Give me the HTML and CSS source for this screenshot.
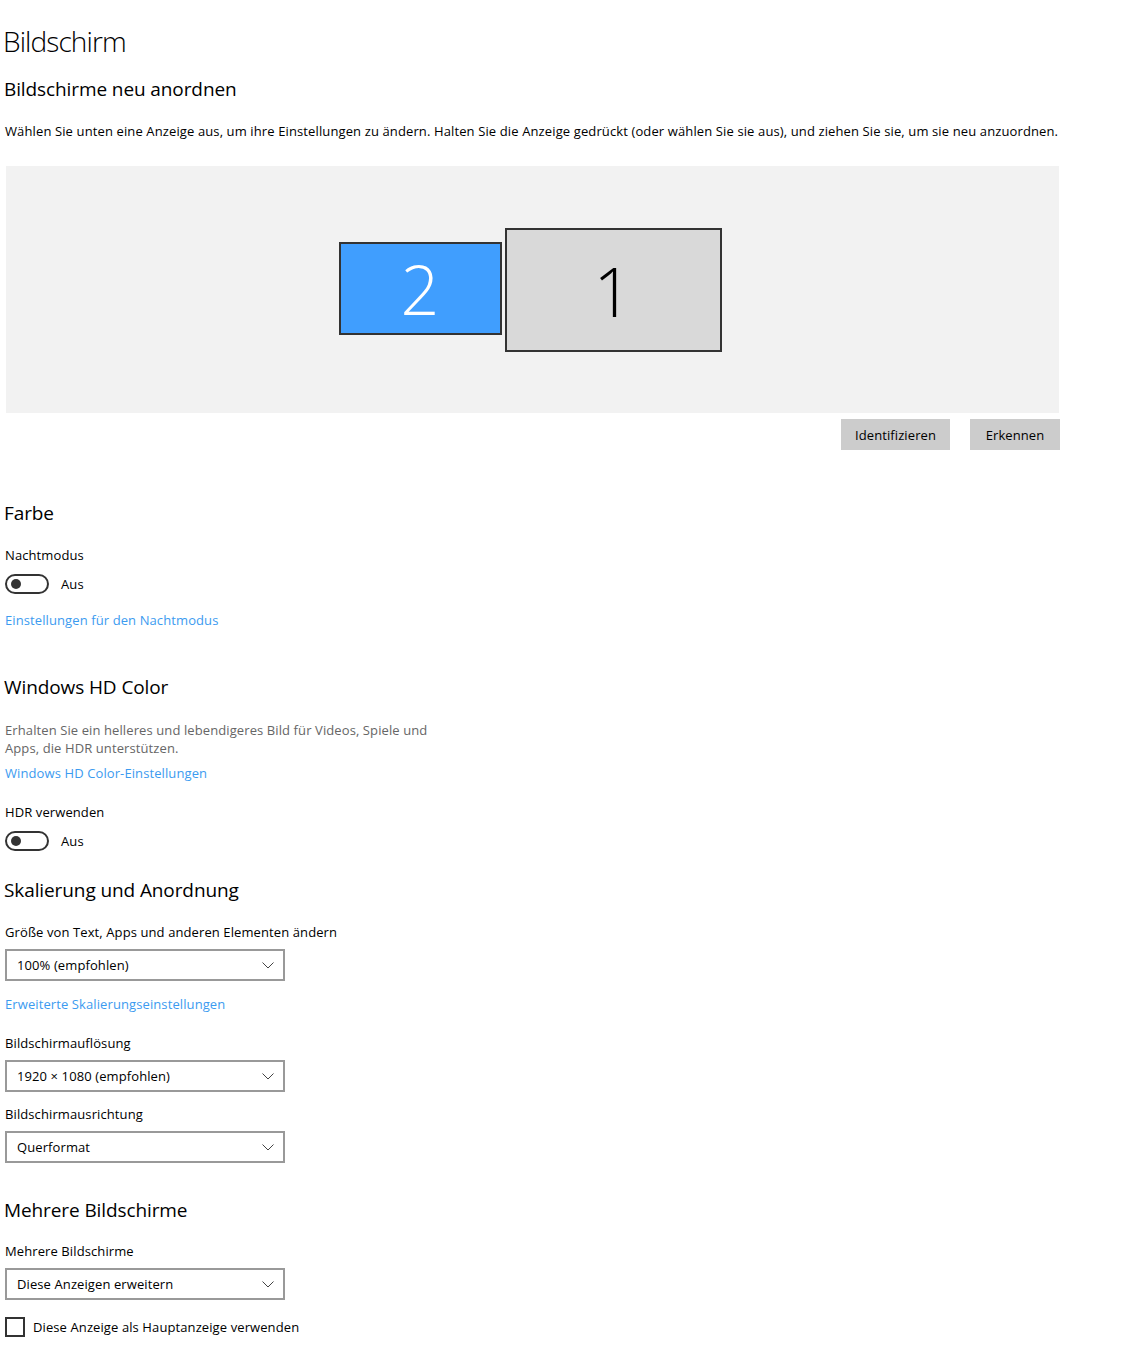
FILE: index.html
```html
<!DOCTYPE html>
<html lang="de">
<head>
<meta charset="utf-8">
<title>Bildschirm</title>
<link rel="stylesheet" href="styles.css">
</head>
<body>
<main class="page">
  <h1 class="title">Bildschirm</h1>
  <h2 class="sub">Bildschirme neu anordnen</h2>
  <p class="desc">Wählen Sie unten eine Anzeige aus, um ihre Einstellungen zu ändern. Halten Sie die Anzeige gedrückt (oder wählen Sie sie aus), und ziehen Sie sie, um sie neu anzuordnen.</p>

  <div class="canvas">
    <div class="monitors">
      <div class="mon mon2">2</div>
      <div class="mon mon1">1</div>
    </div>
  </div>
  <div class="btnrow">
    <button class="btn btn-id">Identifizieren</button>
    <button class="btn btn-er">Erkennen</button>
  </div>

  <section class="sec farbe">
    <h2 class="h">Farbe</h2>
    <div class="label l-nacht">Nachtmodus</div>
    <div class="toggle-row">
      <span class="toggle"><span class="knob"></span></span>
      <span class="tlabel">Aus</span>
    </div>
    <a class="link l-nachtlink">Einstellungen für den Nachtmodus</a>
  </section>

  <section class="sec hd">
    <h2 class="h">Windows HD Color</h2>
    <p class="gray">Erhalten Sie ein helleres und lebendigeres Bild für Videos, Spiele und Apps, die HDR unterstützen.</p>
    <a class="link l-hd">Windows HD Color-Einstellungen</a>
    <div class="label l-hdr">HDR verwenden</div>
    <div class="toggle-row">
      <span class="toggle"><span class="knob"></span></span>
      <span class="tlabel">Aus</span>
    </div>
  </section>

  <section class="sec skal">
    <h2 class="h">Skalierung und Anordnung</h2>
    <div class="label l-size">Größe von Text, Apps und anderen Elementen ändern</div>
    <div class="select">100% (empfohlen)<svg class="chev" viewBox="0 0 12 7"><path d="M0.5 0.5 L6 6 L11.5 0.5" fill="none" stroke="#444" stroke-width="1"/></svg></div>
    <a class="link l-erw">Erweiterte Skalierungseinstellungen</a>
    <div class="label l-res">Bildschirmauflösung</div>
    <div class="select">1920 × 1080 (empfohlen)<svg class="chev" viewBox="0 0 12 7"><path d="M0.5 0.5 L6 6 L11.5 0.5" fill="none" stroke="#444" stroke-width="1"/></svg></div>
    <div class="label l-aus">Bildschirmausrichtung</div>
    <div class="select">Querformat<svg class="chev" viewBox="0 0 12 7"><path d="M0.5 0.5 L6 6 L11.5 0.5" fill="none" stroke="#444" stroke-width="1"/></svg></div>
  </section>

  <section class="sec multi">
    <h2 class="h">Mehrere Bildschirme</h2>
    <div class="label l-multi">Mehrere Bildschirme</div>
    <div class="select">Diese Anzeigen erweitern<svg class="chev" viewBox="0 0 12 7"><path d="M0.5 0.5 L6 6 L11.5 0.5" fill="none" stroke="#444" stroke-width="1"/></svg></div>
    <label class="check-row"><span class="checkbox"></span><span>Diese Anzeige als Hauptanzeige verwenden</span></label>
  </section>
</main>
</body>
</html>
```
FILE: styles.css
```css
* { box-sizing: border-box; }
html, body { margin: 0; padding: 0; background: #fff; }
body {
  font-family: "Open Sans", "Noto Sans", "Liberation Sans", sans-serif;
  color: #000;
  font-size: 13px;
  letter-spacing: 0.1px;
}
.page { padding: 0 0 0 5px; width: 1133px; }
.title {
  font-weight: 300;
  font-size: 28px;
  line-height: 36px;
  margin: 23px 0 0 -2px;
  letter-spacing: -0.9px;
}
.sub, .h {
  font-weight: 400;
  font-size: 19px;
  line-height: 26px;
  margin: 0;
  margin-left: -1px;
  letter-spacing: -0.1px;
}
.sub { margin-top: 17px; }
.desc {
  margin: 20px 0 0 0;
  line-height: 18px;
  letter-spacing: 0.12px;
  white-space: nowrap;
}
.canvas {
  margin: 26px 0 0 1px;
  width: 1053px;
  height: 247px;
  background: #f2f2f2;
  display: flex;
  justify-content: center;
}
.monitors {
  display: flex;
  align-items: flex-start;
  gap: 3px;
  margin-top: 62px;
  margin-left: -5px;
}
.mon {
  border: 2px solid #333;
  display: flex;
  align-items: center;
  justify-content: center;
  font-weight: 300;
  font-size: 68px;
  letter-spacing: 0;
}
.mon2 {
  width: 163px; height: 93px;
  margin-top: 14px;
  background: #409efe;
  color: #fff;
}
.mon1 {
  width: 217px; height: 124px;
  background: #d9d9d9;
  color: #000;
}
.btnrow {
  display: flex;
  justify-content: flex-end;
  gap: 20px;
  width: 1055px;
  margin-top: 6px;
}
.btn {
  font: inherit;
  font-size: 13px;
  letter-spacing: 0.1px;
  height: 31px;
  border: none;
  background: #cccccc;
  color: #000;
  padding: 0;
}
.btn-id { width: 109px; }
.btn-er { width: 90px; }
.sec { display: flex; flex-direction: column; align-items: flex-start; }
.farbe { margin-top: 50px; }
.label { line-height: 18px; }
.l-nacht { margin-top: 20px; }
.toggle-row { display: flex; align-items: center; margin-top: 10px; }
.toggle {
  width: 44px; height: 20px;
  border: 2px solid #333;
  border-radius: 10px;
  display: flex;
  align-items: center;
  padding-left: 4px;
}
.knob { width: 10px; height: 10px; border-radius: 50%; background: #333; }
.tlabel { margin-left: 12px; }
.link {
  color: #3c9bf0;
  line-height: 18px;
  cursor: pointer;
}
.l-nachtlink { margin-top: 17px; }
.hd { margin-top: 45px; }
.gray {
  color: #666;
  margin: 21px 0 0 0;
  width: 440px;
  line-height: 18px;
}
.l-hd { margin-top: 7px; }
.l-hdr { margin-top: 21px; }
.skal { margin-top: 26px; }
.l-size { margin-top: 20px; }
.select {
  margin-top: 8px;
  width: 280px;
  height: 32px;
  border: 2px solid #999;
  display: flex;
  align-items: center;
  justify-content: space-between;
  padding: 0 9px 0 10px;
}
.chev { width: 12px; height: 7px; }
.l-erw { margin-top: 14px; }
.l-res { margin-top: 21px; }
.l-aus { margin-top: 13px; }
.multi { margin-top: 34px; }
.l-multi { margin-top: 19px; }
.check-row {
  display: flex;
  align-items: center;
  margin-top: 17px;
}
.checkbox {
  width: 20px; height: 20px;
  border: 2px solid #333;
  margin: 0 8px 0 0;
}
```
